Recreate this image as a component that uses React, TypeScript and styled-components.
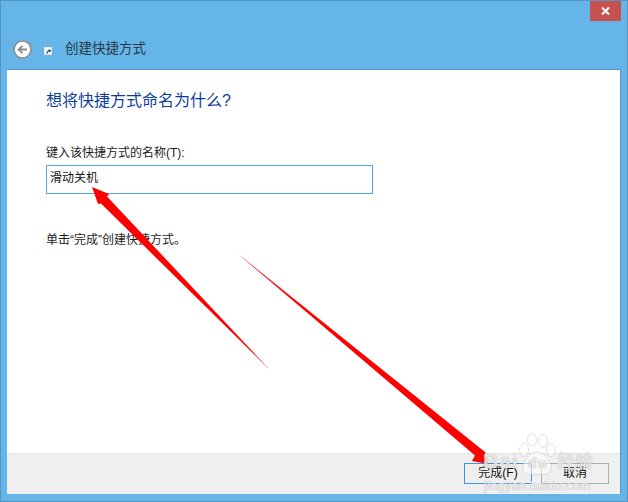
import * as React from "react";
import styled, { createGlobalStyle } from "styled-components";

const GlobalStyle = createGlobalStyle`
  html, body {
    margin: 0;
    padding: 0;
    background: #66b5e8;
    font-family: "Liberation Sans", "Noto Sans CJK SC", sans-serif;
  }
`;

const Frame = styled.div`
  position: relative;
  width: 628px;
  height: 502px;
  box-sizing: border-box;
  border: 1px solid #5596c4;
  background: #66b5e8;
  display: flex;
  flex-direction: column;
  overflow: hidden;
`;

const TitleBar = styled.div`
  height: 20px;
  flex: none;
  display: flex;
  justify-content: flex-end;
  padding-right: 5px;
`;

const CloseButton = styled.div`
  width: 31px;
  height: 20px;
  margin-right: 1px;
  background: #c75050;
  display: flex;
  align-items: center;
  justify-content: center;
`;

const NavRow = styled.div`
  height: 48px;
  flex: none;
  display: flex;
  align-items: center;
  padding-left: 12px;
`;

const BackButton = styled.div`
  width: 19px;
  height: 19px;
  flex: none;
  margin-top: 8px;
  display: flex;
`;

const ShortcutIcon = styled.div`
  width: 8px;
  height: 8px;
  flex: none;
  margin: 12px 0 0 12px;
  display: flex;
`;

const WizardTitle = styled.div`
  margin: 8px 0 0 13px;
  font-size: 13.5px;
  line-height: 18px;
  color: #25394a;
`;

const Panel = styled.div`
  flex: 1;
  margin: 0 6px 7px 6px;
  display: flex;
  flex-direction: column;
  background: #fff;
  border-top: 1px solid #5596c4;
  border-right: 1px solid #5596c4;
  min-height: 0;
`;

const PanelBody = styled.div`
  flex: 1;
  padding: 21px 0 0 39px;
`;

const Heading = styled.h1`
  margin: 0;
  font-size: 16px;
  line-height: 20px;
  font-weight: 400;
  color: #0f3c9b;
`;

const FieldLabel = styled.label`
  display: block;
  margin-top: 34px;
  font-size: 12px;
  line-height: 16px;
  color: #1c1c1c;
`;

const NameBox = styled.div`
  box-sizing: border-box;
  width: 327px;
  height: 29px;
  margin-top: 4px;
  padding: 2px 0 0 3px;
  border: 1px solid #5aa2dc;
  font-size: 12px;
  line-height: 20px;
  color: #111;
`;

const Hint = styled.p`
  margin: 38px 0 0;
  font-size: 12px;
  line-height: 16px;
  color: #1c1c1c;
`;

const Footer = styled.div`
  height: 41px;
  flex: none;
  box-sizing: border-box;
  background: #f0f0f0;
  border-top: 1px solid #e4e4e4;
  display: flex;
  justify-content: flex-end;
  align-items: flex-start;
  gap: 9px;
  padding: 9px 11px 0 0;
`;

const ActionButton = styled.div<{ $primary?: boolean }>`
  box-sizing: border-box;
  width: 68px;
  height: 21px;
  background: #efefef;
  border: 1px solid ${(p) => (p.$primary ? "#3f93e0" : "#adadad")};
  font-size: 12px;
  line-height: 19px;
  text-align: center;
  color: #111;
`;

const Overlay = styled.svg`
  position: absolute;
  left: -1px;
  top: -1px;
  width: 628px;
  height: 502px;
  pointer-events: none;
`;

const Watermark = styled.div`
  position: absolute;
  left: 482px;
  top: 448px;
  width: 130px;
  color: rgba(255, 255, 255, 0.7);
  text-shadow: 0 0 1px rgba(150, 150, 150, 0.85);
`;

const WatermarkBrand = styled.div`
  display: flex;
  align-items: baseline;
  font-family: "Liberation Sans", sans-serif;
  font-size: 21px;
  line-height: 22px;
  font-weight: 700;
  letter-spacing: 1px;
`;

const WatermarkDu = styled.span`
  margin-left: 9px;
  font-size: 15px;
`;

const WatermarkWord = styled.span`
  margin-left: 9px;
  font-family: "Noto Sans CJK SC", sans-serif;
  font-size: 18px;
  font-weight: 500;
  letter-spacing: 0;
`;

const WatermarkSite = styled.div`
  margin: 6px 0 0 1px;
  font-family: "Liberation Sans", sans-serif;
  font-size: 12.5px;
  line-height: 12px;
  letter-spacing: 0.35px;
`;

const App = () => {
  return (
    <>
      <GlobalStyle />
      <Frame>
        <TitleBar>
          <CloseButton>
            <svg width="9" height="8" viewBox="0 0 9 8">
              <path d="M1 0.5 L8 7.5 M8 0.5 L1 7.5" stroke="#fff" strokeWidth="2" fill="none" />
            </svg>
          </CloseButton>
        </TitleBar>
        <NavRow>
          <BackButton>
            <svg width="19" height="19" viewBox="0 0 19 19">
              <circle cx="9.5" cy="9.5" r="8.5" fill="#fff" stroke="#8e8e8e" strokeWidth="1.6" />
              <path d="M14 9.5 H6 M9.5 5.8 L5.6 9.5 L9.5 13.2" stroke="#8e8e8e" strokeWidth="1.8" fill="none" />
            </svg>
          </BackButton>
          <ShortcutIcon>
            <svg width="8" height="8" viewBox="0 0 8 8">
              <rect x="0" y="0" width="8" height="8" fill="#f4f6f8" stroke="#c8d0d8" strokeWidth="0.6" />
              <path d="M2.5 7 C2.5 4.5 3.5 3.5 5 3.2 L4.4 2 L7.4 3.4 L5.2 5.6 L5 4.5 C4 4.7 3.4 5.4 3.4 7 Z" fill="#17397e" />
            </svg>
          </ShortcutIcon>
          <WizardTitle>创建快捷方式</WizardTitle>
        </NavRow>
        <Panel>
          <PanelBody>
            <Heading>想将快捷方式命名为什么?</Heading>
            <FieldLabel>键入该快捷方式的名称(T):</FieldLabel>
            <NameBox>滑动关机</NameBox>
            <Hint>单击“完成”创建快捷方式。</Hint>
          </PanelBody>
          <Footer>
            <ActionButton $primary>完成(F)</ActionButton>
            <ActionButton>取消</ActionButton>
          </Footer>
        </Panel>
        <Overlay viewBox="0 0 628 502">
          <g fill="rgba(255,255,255,0.55)" stroke="rgba(185,185,185,0.55)" strokeWidth="0.8">
            <ellipse cx="524" cy="450" rx="4.5" ry="6.5" />
            <ellipse cx="532" cy="440" rx="4.5" ry="6.5" />
            <ellipse cx="543" cy="441" rx="4.5" ry="6.5" />
            <ellipse cx="551" cy="450" rx="4.5" ry="6.5" />
            <path d="M537 452 C544 452 549 459 551 465 C553 474 544 476 537 474 C530 476 521 474 523 465 C525 459 530 452 537 452 Z" />
          </g>
          <g fill="#fe0000">
            <polygon points="92,187 109,194 107,196.5 270,370 101,203.5 98,204" />
            <polygon points="237,253 480,448 485,452 488,464 472,461 475,455.5" />
          </g>
        </Overlay>
        <Watermark>
          <WatermarkBrand>
            Bai
            <WatermarkDu>du</WatermarkDu>
            <WatermarkWord>经验</WatermarkWord>
          </WatermarkBrand>
          <WatermarkSite>jingyan.baidu.com</WatermarkSite>
        </Watermark>
      </Frame>
    </>
  );
};

export default App;
